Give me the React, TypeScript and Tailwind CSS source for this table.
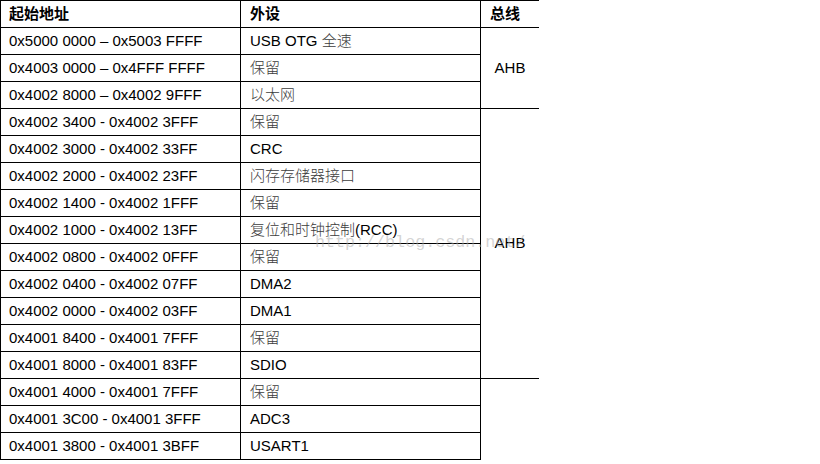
import React from 'react';

const rows: [string, string][] = [
  ['0x5000 0000 – 0x5003 FFFF', 'USB OTG\u00a0全速'],
  ['0x4003 0000 – 0x4FFF FFFF', '保留'],
  ['0x4002 8000 – 0x4002 9FFF', '以太网'],
  ['0x4002 3400 - 0x4002 3FFF', '保留'],
  ['0x4002 3000 - 0x4002 33FF', 'CRC'],
  ['0x4002 2000 - 0x4002 23FF', '闪存存储器接口'],
  ['0x4002 1400 - 0x4002 1FFF', '保留'],
  ['0x4002 1000 - 0x4002 13FF', '复位和时钟控制(RCC)'],
  ['0x4002 0800 - 0x4002 0FFF', '保留'],
  ['0x4002 0400 - 0x4002 07FF', 'DMA2'],
  ['0x4002 0000 - 0x4002 03FF', 'DMA1'],
  ['0x4001 8400 - 0x4001 7FFF', '保留'],
  ['0x4001 8000 - 0x4001 83FF', 'SDIO'],
  ['0x4001 4000 - 0x4001 7FFF', '保留'],
  ['0x4001 3C00 - 0x4001 3FFF', 'ADC3'],
  ['0x4001 3800 - 0x4001 3BFF', 'USART1'],
];

// CJK glyphs in the source render thinner and greyer than the Latin ones
const Mixed = ({ text }: { text: string }) => (
  <>
    {text.split(/([\u4e00-\u9fff]+)/).map((part, i) =>
      /[\u4e00-\u9fff]/.test(part) ? (
        <span key={i} className="text-[#3c3c3c] font-light">{part}</span>
      ) : (
        <span key={i} className="whitespace-pre">{part}</span>
      )
    )}
  </>
);

const App = () => {
  const busCell = 'col-start-3 flex items-center justify-center';

  return (
    <div className="relative w-[820px] h-[464px] bg-white text-black text-[15px] font-['Liberation_Sans','Noto_Sans_CJK_SC',sans-serif]">
      <div className="grid w-[539px] grid-cols-[240px_240px_58px] grid-rows-[repeat(17,27px)] border-l border-t border-black">
        <div className="flex items-center pl-2 border-r border-b border-black font-bold">起始地址</div>
        <div className="flex items-center pl-[9px] border-r border-b border-black font-bold">外设</div>
        <div className="flex items-center pl-[9px] border-b border-black font-bold">总线</div>

        {rows.map(([addr, dev], i) => (
          <React.Fragment key={i}>
            <div
              className="col-start-1 flex items-center pl-2 border-r border-b border-black"
              style={{ gridRowStart: i + 2 }}
            >
              {addr}
            </div>
            <div
              className="col-start-2 flex items-center pl-[9px] border-r border-b border-black"
              style={{ gridRowStart: i + 2 }}
            >
              <Mixed text={dev} />
            </div>
          </React.Fragment>
        ))}

        <div className={`${busCell} row-start-2 row-span-3 border-b border-black`}>AHB</div>
        <div className={`${busCell} row-start-5 row-span-10 border-b border-black`}>AHB</div>
        <div className={`${busCell} row-start-15 row-span-3`}></div>
      </div>

      <div className="pointer-events-none absolute left-[315px] top-[235px] text-[16.7px] leading-[16px] text-[rgba(170,170,170,0.5)] font-['Liberation_Mono',monospace]">
        http://blog.csdn.net/
      </div>
    </div>
  );
};

export default App;
